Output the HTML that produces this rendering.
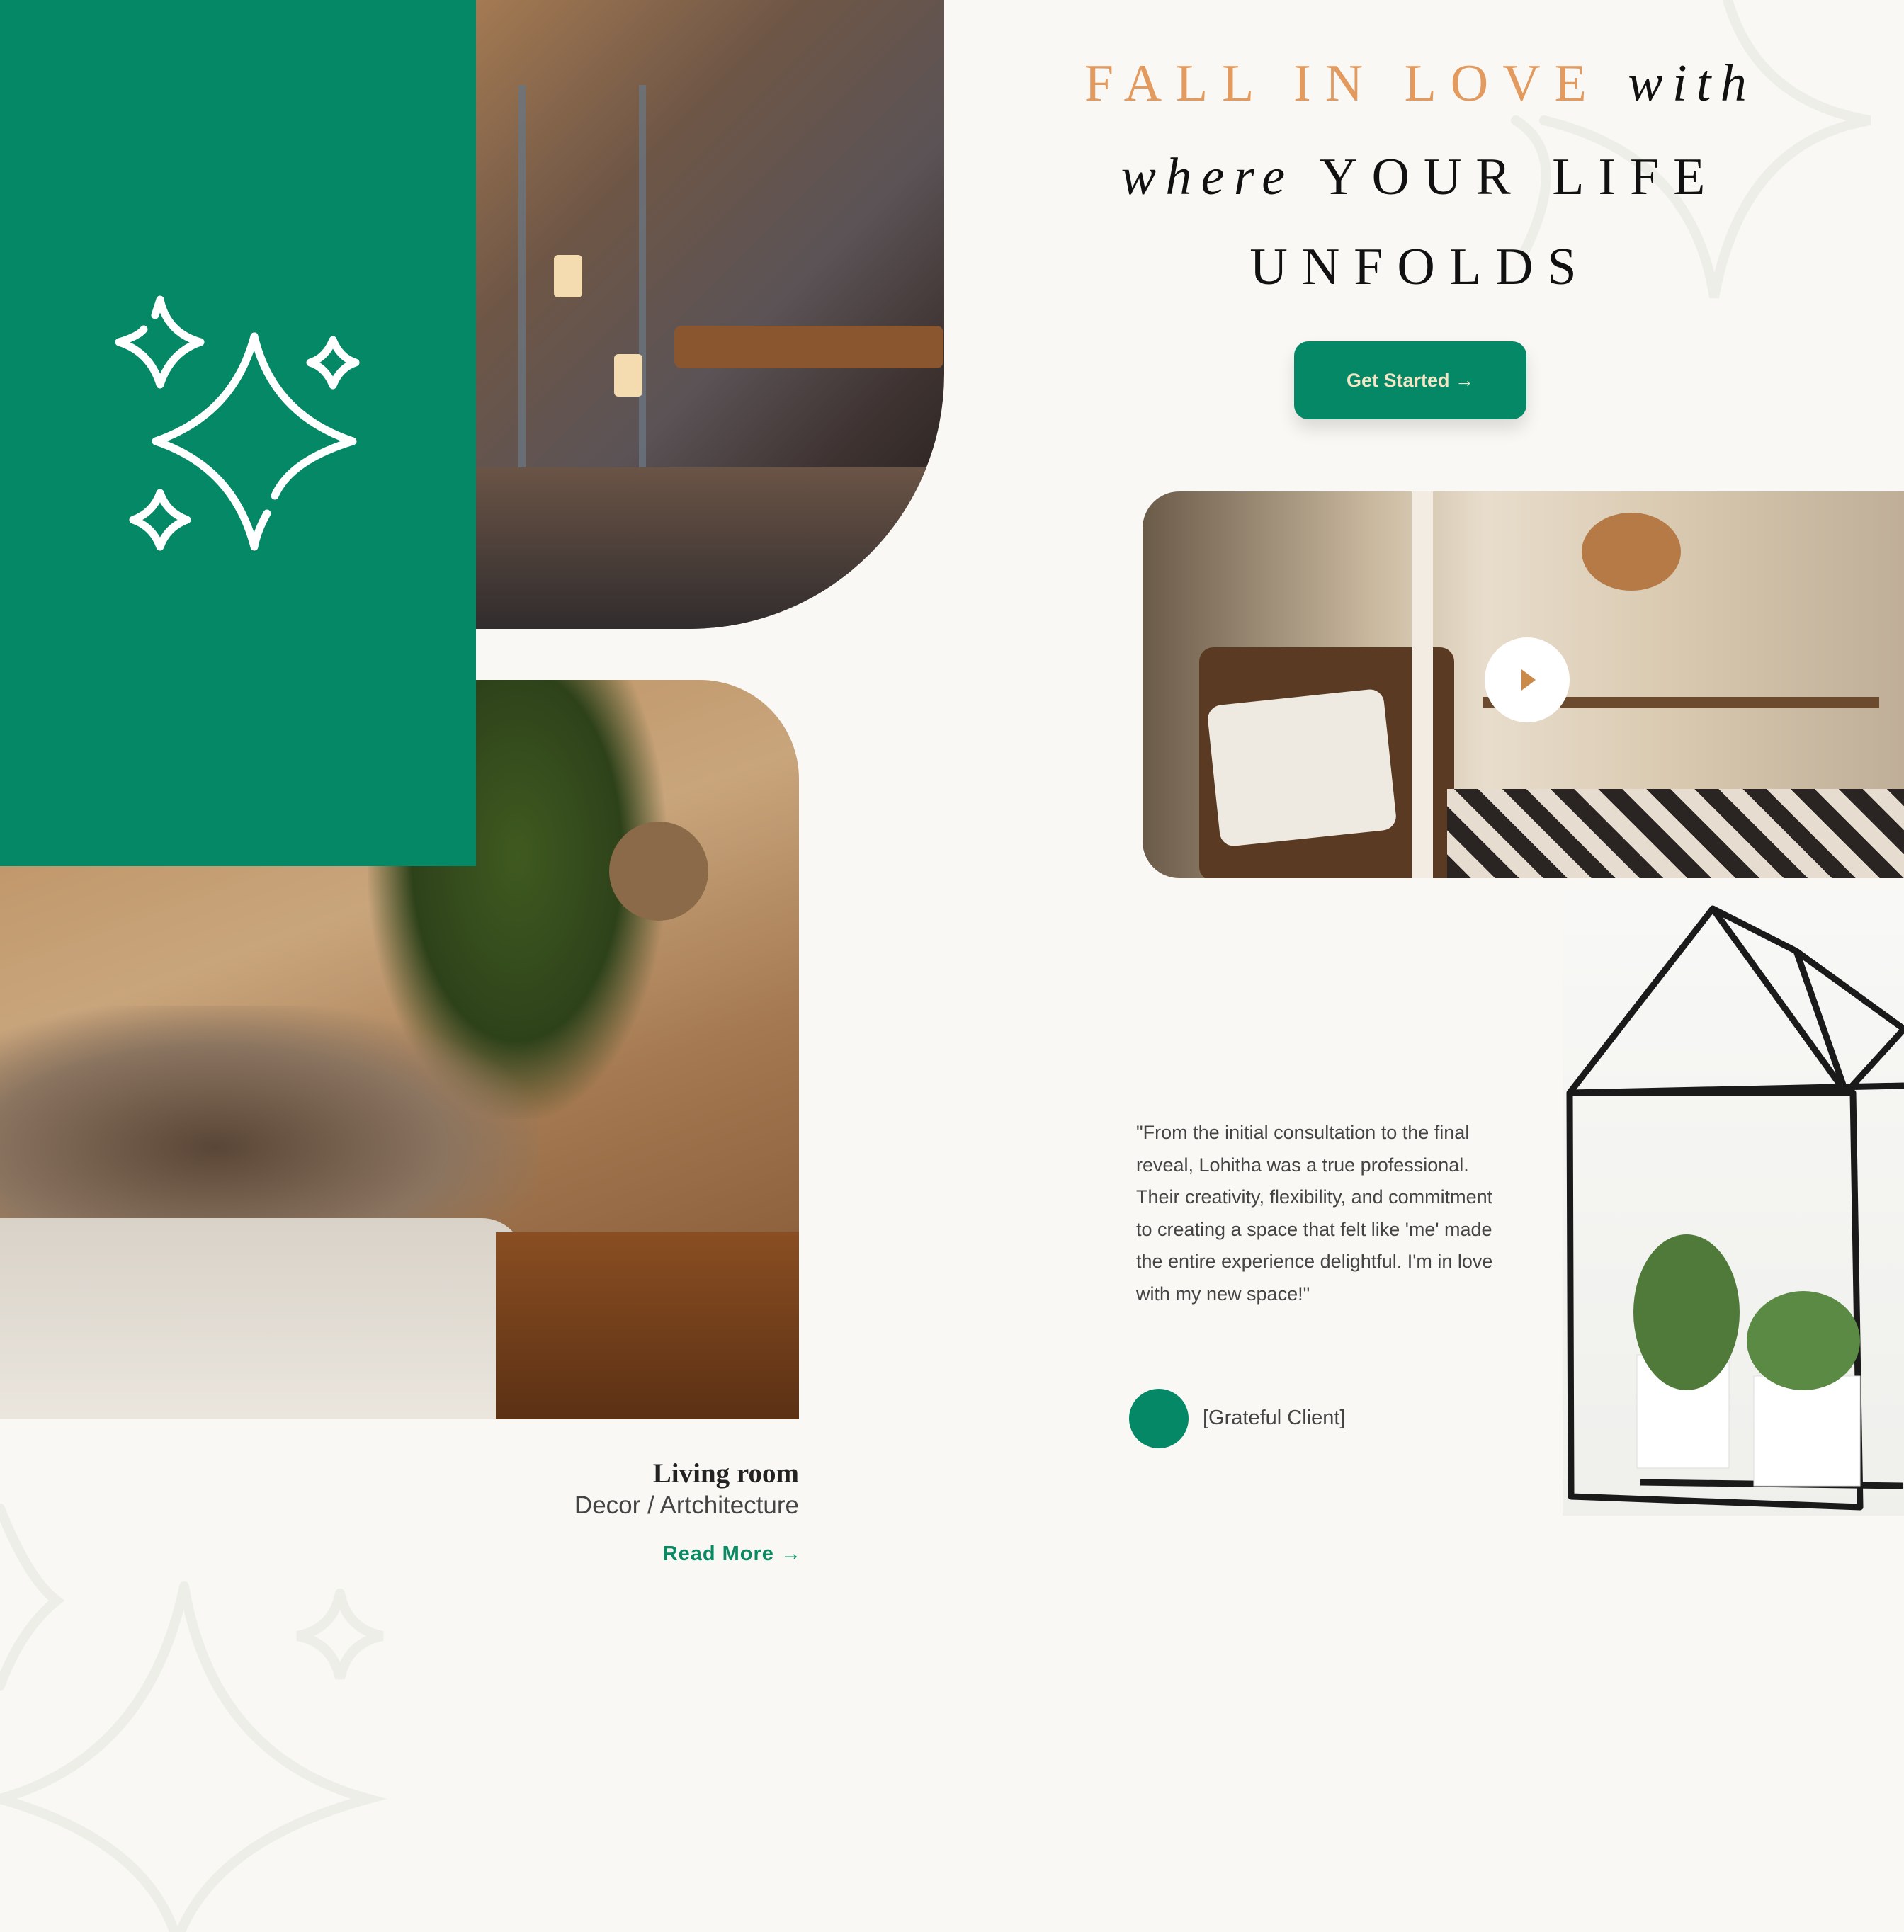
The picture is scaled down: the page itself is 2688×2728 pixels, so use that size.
<!DOCTYPE html>
<html><head><meta charset="utf-8"><style>
*{margin:0;padding:0;box-sizing:border-box}
body{width:2688px;height:2728px;background:#f9f8f4;position:relative;overflow:hidden;font-family:"Liberation Sans",sans-serif}
.abs{position:absolute}
.h{position:absolute;left:1400px;width:1210px;text-align:center;font-family:"Liberation Serif",serif;font-size:74px;letter-spacing:0.27em;color:#111;white-space:nowrap}
.h i{letter-spacing:0.18em}
</style></head><body>
<svg class="abs" style="left:0;top:0" width="2688" height="2728">
 <g fill="none" stroke="#eeeee8" stroke-width="14" stroke-linecap="round">
  <path d="M2430 -40 Q2460 140 2640 170 Q2460 200 2420 420 Q2390 220 2180 170"/>
  <path d="M2140 170 Q2220 220 2150 360"/>
  <path d="M260 2240 Q300 2480 520 2540 Q300 2600 250 2740 Q210 2600 0 2540 Q210 2480 260 2240"/>
  <path d="M480 2250 Q490 2300 540 2310 Q490 2320 480 2370 Q470 2320 420 2310 Q470 2300 480 2250"/>
  <path d="M0 2130 Q40 2230 80 2260 Q30 2300 0 2380"/>
 </g>
</svg>
<div class="abs" style="left:672px;top:0;width:661px;height:888px;border-bottom-right-radius:360px;overflow:hidden;background:linear-gradient(135deg,#a47a52 0%,#6e5646 30%,#5b5356 55%,#3d3230 75%,#1e1a18 100%)">
 <div class="abs" style="left:60px;top:120px;width:180px;height:620px;border:10px solid #6a7580;border-top:none;border-bottom:none;opacity:.8"></div>
 <div class="abs" style="left:0;top:660px;width:661px;height:240px;background:linear-gradient(180deg,#6a5446,#2e2a2c)"></div>
 <div class="abs" style="left:280px;top:460px;width:380px;height:60px;background:#8a5630;border-radius:10px"></div>
 <div class="abs" style="left:110px;top:360px;width:40px;height:60px;background:#f5dcb0;border-radius:6px"></div>
 <div class="abs" style="left:195px;top:500px;width:40px;height:60px;background:#f5dcb0;border-radius:6px"></div>
</div>
<div class="abs" style="left:0;top:960px;width:1128px;height:1044px;border-top-right-radius:140px;overflow:hidden;background:linear-gradient(160deg,#b88a5a 0%,#c9a57c 35%,#a57a52 60%,#7a4e2c 100%)">
 <div class="abs" style="left:520px;top:0;width:420px;height:620px;background:radial-gradient(ellipse at 50% 40%,#3f5a20 0%,#2e421a 50%,rgba(0,0,0,0) 72%)"></div>
 <div class="abs" style="left:860px;top:200px;width:140px;height:140px;border-radius:50%;background:#8a6a48"></div>
 <div class="abs" style="left:0;top:460px;width:760px;height:400px;background:radial-gradient(ellipse at 40% 50%,#5a4636 0%,#8a7460 50%,rgba(0,0,0,0) 75%)"></div>
 <div class="abs" style="left:0;top:760px;width:740px;height:290px;background:linear-gradient(180deg,#d8d2c8,#ebe6de);border-top-right-radius:60px"></div>
 <div class="abs" style="left:700px;top:780px;width:430px;height:270px;background:linear-gradient(180deg,#8a4e22,#5a3014)"></div>
</div>
<div class="abs" style="left:0;top:0;width:672px;height:1223px;background:#058866"></div>
<svg class="abs" style="left:0;top:0" width="672" height="900">
 <g fill="none" stroke="#fff" stroke-width="11" stroke-linecap="round" stroke-linejoin="round">
  <path d="M359 475 Q385 585 498 623 Q410 650 388 700"/>
  <path d="M377 725 Q363 750 359 772 Q330 660 220 623 Q330 585 359 475"/>
  <path d="M219 445 L226 423 Q236 470 283 483 Q241 497 226 543 Q212 497 168 483 Q195 475 203 465"/>
  <path d="M470 480 Q480 505 502 512 Q480 519 470 544 Q460 519 438 512 Q460 505 470 480Z"/>
  <path d="M226 696 Q236 724 264 734 Q236 744 226 772 Q216 744 188 734 Q216 724 226 696Z"/>
 </g>
</svg>
<div class="abs" style="left:600px;top:2058px;width:528px;text-align:right;font-family:'Liberation Serif',serif;font-weight:bold;font-size:39px;color:#222">Living room</div>
<div class="abs" style="left:600px;top:2106px;width:528px;text-align:right;font-size:35px;color:#444">Decor / Artchitecture</div>
<div class="abs" style="left:800px;top:2178px;width:332px;text-align:right;font-size:29px;font-weight:bold;color:#0a8a62;letter-spacing:1px">Read More <span style="font-weight:normal">→</span></div>
<div class="h" style="top:76px;color:#e39a5e">FALL IN LOVE <i style="color:#111">with</i></div>
<div class="h" style="top:208px"><i>where</i> YOUR LIFE</div>
<div class="h" style="top:335px">UNFOLDS</div>
<div class="abs" style="left:1827px;top:482px;width:328px;height:110px;border-radius:20px;background:#058866;box-shadow:0 14px 24px rgba(0,0,0,.12);color:#f3e6c6;font-size:27px;font-weight:bold;text-align:center;line-height:110px">Get Started →</div>
<div class="abs" style="left:1613px;top:694px;width:1075px;height:546px;border-radius:52px 0 0 52px;overflow:hidden;background:linear-gradient(90deg,#6a5a48 0%,#c9b89e 30%,#e8ddcc 45%,#d9c9b0 70%,#bfae98 100%)">
 <div class="abs" style="left:80px;top:220px;width:360px;height:330px;background:#5a3a22;border-radius:20px"></div>
 <div class="abs" style="left:100px;top:290px;width:250px;height:200px;background:#eeeae2;border-radius:20px;transform:rotate(-6deg)"></div>
 <div class="abs" style="left:380px;top:0;width:30px;height:546px;background:#f2ece2"></div>
 <div class="abs" style="left:430px;top:420px;width:645px;height:126px;background:repeating-linear-gradient(45deg,#2a2522 0 24px,#e6ddd0 24px 48px)"></div>
 <div class="abs" style="left:480px;top:290px;width:560px;height:16px;background:#6b4a2e"></div>
 <div class="abs" style="left:620px;top:30px;width:140px;height:110px;border-radius:50%;background:#b57a45"></div>
</div>
<div class="abs" style="left:2096px;top:900px;width:120px;height:120px;border-radius:50%;background:#fff"></div>
<div class="abs" style="left:2148px;top:945px;width:0;height:0;border-left:20px solid #c98a4a;border-top:15px solid transparent;border-bottom:15px solid transparent"></div>
<div class="abs" style="left:2206px;top:1253px;width:482px;height:887px;background:linear-gradient(180deg,#f8f8f6,#efefec)"></div>
<svg class="abs" style="left:2206px;top:1253px" width="482" height="887">
 <g fill="none" stroke="#1a1a1a" stroke-width="9" stroke-linejoin="round">
  <path d="M10 290 L212 30 L400 290 L482 200"/>
  <path d="M212 30 L330 90 L482 200"/>
  <path d="M10 290 L12 860 L420 875 L410 290 Z"/>
  <path d="M10 290 L482 280"/>
  <path d="M330 90 L400 290"/>
  <path d="M110 840 L480 845"/>
 </g>
 <rect x="105" y="660" width="130" height="160" fill="#fff" stroke="#ddd"/>
 <rect x="270" y="690" width="150" height="155" fill="#fff" stroke="#ddd"/>
 <ellipse cx="175" cy="600" rx="75" ry="110" fill="#4f7a3a"/>
 <ellipse cx="340" cy="640" rx="80" ry="70" fill="#5a8a44"/>
</svg>
<div class="abs" style="left:1604px;top:1577px;width:530px;font-size:27px;line-height:45.5px;color:#444">"From the initial consultation to the final reveal, Lohitha was a true professional. Their creativity, flexibility, and commitment to creating a space that felt like 'me' made the entire experience delightful. I'm in love with my new space!"</div>
<div class="abs" style="left:1594px;top:1961px;width:84px;height:84px;border-radius:50%;background:#058866"></div>
<div class="abs" style="left:1698px;top:1986px;font-size:29px;color:#444">[Grateful Client]</div>
</body></html>
